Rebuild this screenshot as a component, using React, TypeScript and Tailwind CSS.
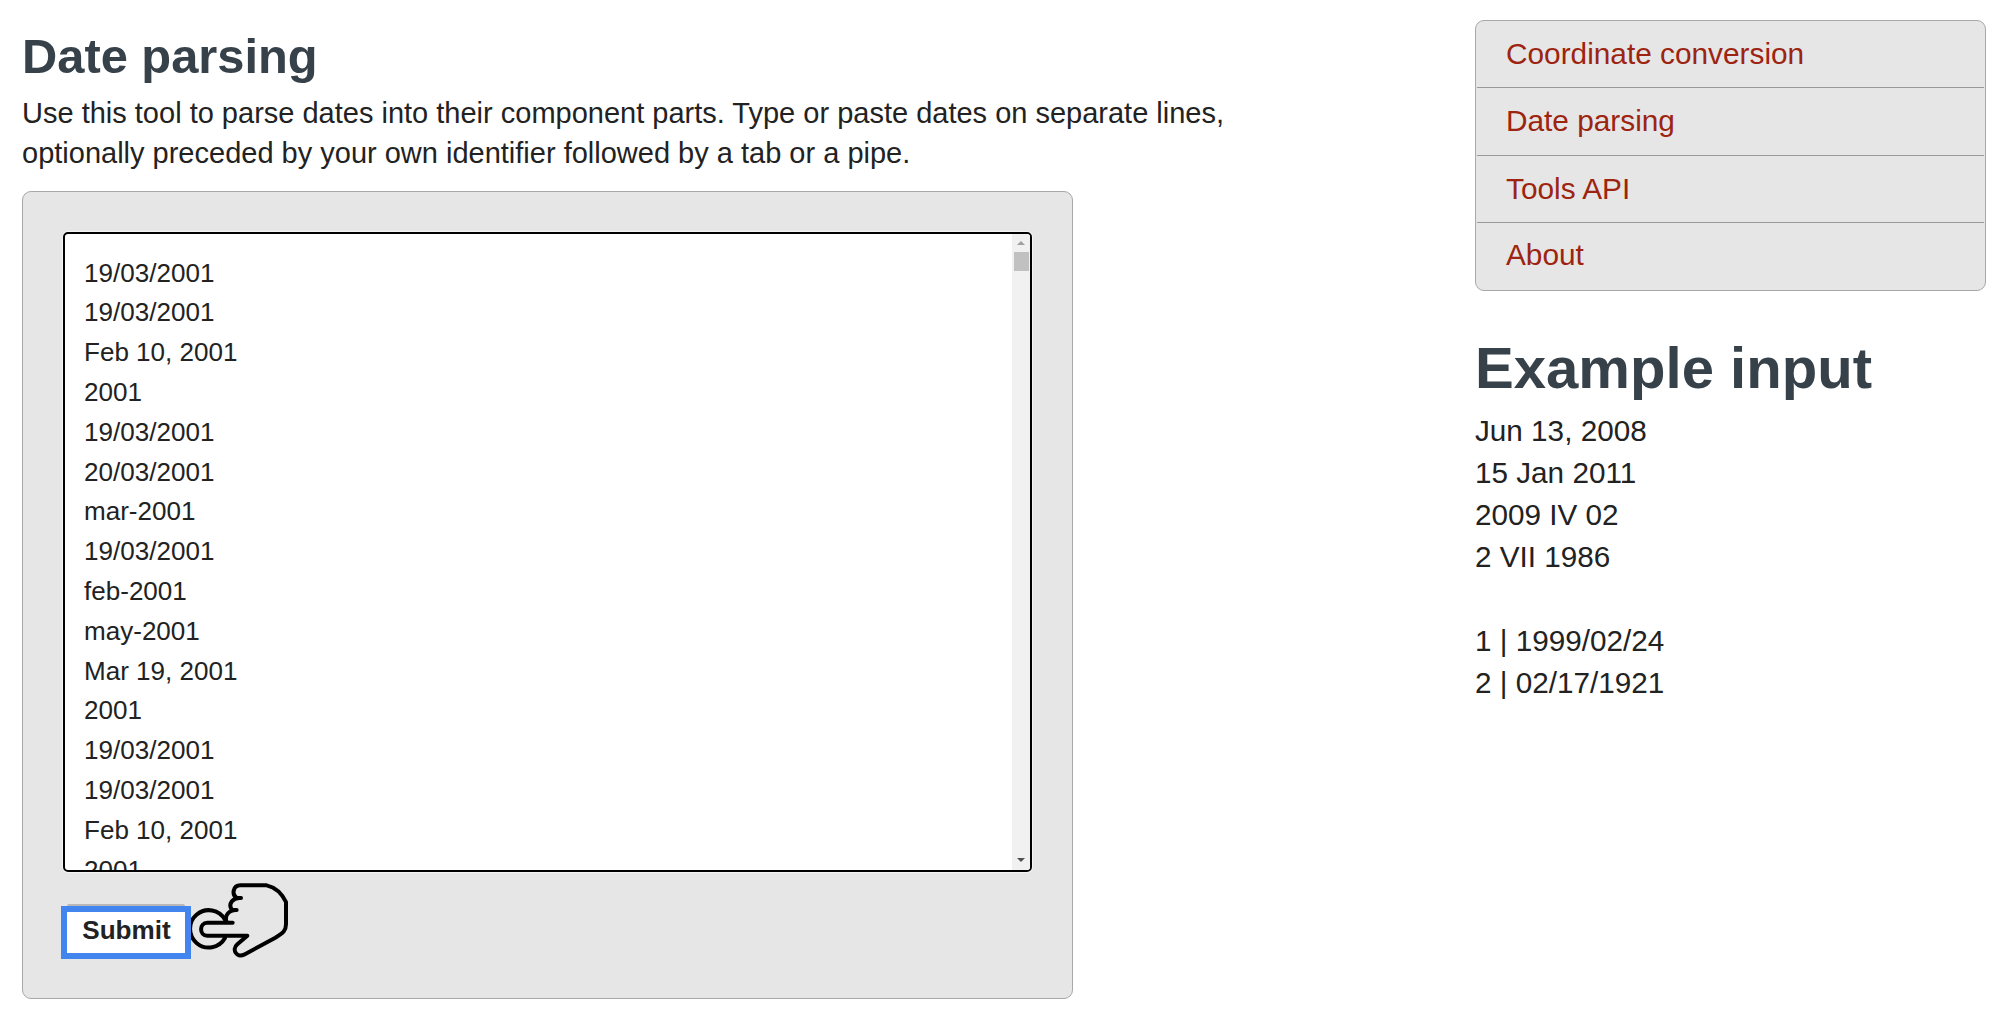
const dates = [
  '19/03/2001', '19/03/2001', 'Feb 10, 2001', '2001', '19/03/2001', '20/03/2001',
  'mar-2001', '19/03/2001', 'feb-2001', 'may-2001', 'Mar 19, 2001', '2001',
  '19/03/2001', '19/03/2001', 'Feb 10, 2001', '2001',
];

const links = ['Coordinate conversion', 'Date parsing', 'Tools API', 'About'];

const examples = ['Jun 13, 2008', '15 Jan 2011', '2009 IV 02', '2 VII 1986', '', '1 | 1999/02/24', '2 | 02/17/1921'];

function PointingHand() {
  return (
    <svg className="mt-[-22px] h-[77px] w-[99px] shrink-0" viewBox="453 125 297 231" fill="none" stroke="#000" strokeWidth="12" strokeLinejoin="round" strokeLinecap="round">
      <path d="M555 238A56 56 0 1 0 555 293" />
      <path
        fill="#e6e6e6"
        d="M578 247H502C477 247 477 286 502 286H622L592 312C574 328 590 353 612 343L706 292C730 278 738 270 738 252V185C725 158 706 141 680 135H601C578 136 575 163 590 173H603C578 170 563 192 576 209H590C567 208 552 226 560 245"
      />
    </svg>
  );
}

function DateInput() {
  return (
    <div className="flex h-[640px] w-[969px] overflow-hidden rounded-[5px] border-[2.5px] border-black bg-white shadow-[0_0_0_1px_#f4f4f4]">
      <div className="flex-1 overflow-hidden pl-[19px] pt-[20px] text-[26.05px] leading-[39.8px]">
        {dates.map((d, i) => (
          <div key={i}>{d}</div>
        ))}
      </div>
      <div className="flex w-[18px] flex-col items-center bg-[#f1f1f1]">
        <svg className="mt-[7px] h-[4px] w-[8px] shrink-0" viewBox="0 0 8 4"><path d="M0 4L4 0L8 4Z" fill="#a0a0a0" /></svg>
        <div className="mt-[7px] h-[19px] w-[15px] shrink-0 bg-[#c1c1c1]" />
        <svg className="mt-auto mb-[8px] h-[4px] w-[8px] shrink-0" viewBox="0 0 8 4"><path d="M0 0L4 4L8 0Z" fill="#505050" /></svg>
      </div>
    </div>
  );
}

export default function App() {
  return (
    <div className="flex h-[1011px] w-[2000px] justify-between overflow-hidden bg-white font-['Liberation_Sans',Arial,sans-serif] text-[#222]">
      <main className="pl-[22px] pt-[28px]">
        <h1 className="text-[48.8px] font-bold leading-[56px] text-[#37414a]">Date parsing</h1>
        <p className="mt-[10px] w-[1230px] text-[29px] leading-[39.8px]">
          Use this tool to parse dates into their component parts. Type or paste dates on separate lines,
          <br />
          optionally preceded by your own identifier followed by a tab or a pipe.
        </p>
        <form className="mt-[17px] h-[808px] w-[1051px] rounded-[9px] border-[1.5px] border-[#a8a8a8] bg-[#e6e6e6] pl-[40px] pt-[40px]">
          <DateInput />
          <div className="-ml-[2px] mt-[32px] flex items-start">
            <div>
              <div className="mx-[6px] h-[2px] rounded-t-[4px] bg-[#b8b8b8]" />
              <button type="button" className="block h-[53px] w-[130px] border-[6px] border-[#4285ee] bg-white pb-[3px] pl-px text-[26.1px] font-bold leading-[35px]">
                Submit
              </button>
            </div>
            <PointingHand />
          </div>
        </form>
      </main>
      <aside className="w-[525px] pt-[20px]">
        <nav className="h-[271px] w-[511px] divide-y divide-[#999] rounded-[9px] border-[1.5px] border-[#a8a8a8] bg-[#e6e6e6] px-px">
          {links.map((l) => (
            <a key={l} className="block h-[67.3px] pl-[29px] text-[29.8px] leading-[65px] text-[#9c2410] last:leading-[63px]">{l}</a>
          ))}
        </nav>
        <h1 className="mt-[44px] text-[58.1px] font-bold leading-[66px] text-[#37414a]">Example input</h1>
        <div className="mt-[9px] text-[29.7px] leading-[41.95px]">
          {examples.map((e, i) => (
            <div key={i} className="h-[41.95px]">{e}</div>
          ))}
        </div>
      </aside>
    </div>
  );
}
